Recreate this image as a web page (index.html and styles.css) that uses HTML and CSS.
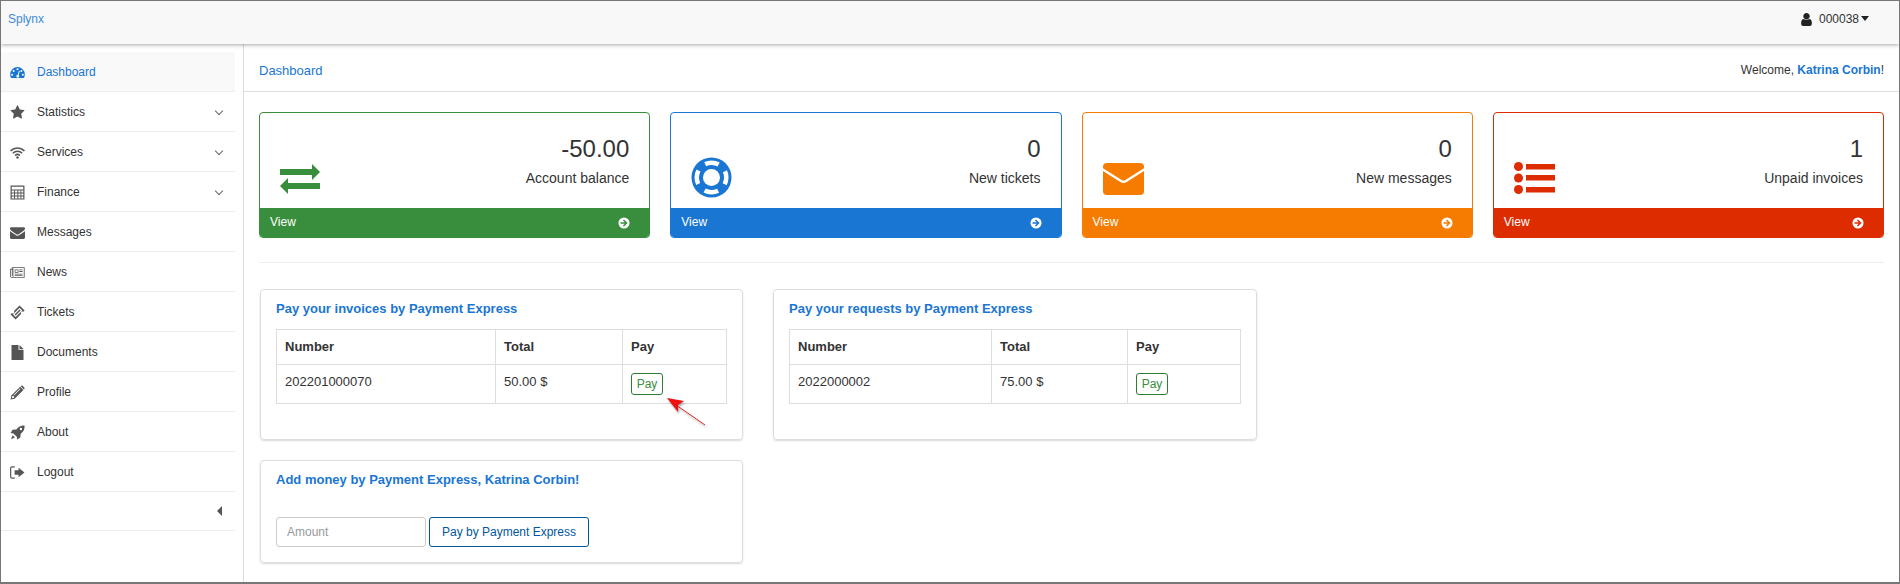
FILE: index.html
```html
<!DOCTYPE html>
<html lang="en">
<head>
<meta charset="UTF-8">
<meta name="viewport" content="width=device-width, initial-scale=1.0">
<title>Splynx - Dashboard</title>
<link rel="stylesheet" href="styles.css">
</head>
<body>
<svg class="sprite" xmlns="http://www.w3.org/2000/svg">
    <symbol id="i-circle-right" viewBox="0 0 16 16">
        <path fill-rule="evenodd" d="M8 .6a7.4 7.4 0 1 0 0 14.8A7.4 7.4 0 0 0 8 .6zM8 3.2 12.8 8 8 12.8 6.6 11.4 9 9.1H3.4V6.900H9L6.600 4.600z"/>
    </symbol>
    <symbol id="i-star" viewBox="0 0 1792 1792">
        <path d="M1728 647q0 22-26 48l-363 354 86 500q1 7 1 20 0 21-10.500 35.500t-30.500 14.500q-19 0-40-12l-449-236-449 236q-22 12-40 12-21 0-31.500-14.500t-10.500-35.500q0-6 2-20l86-500-364-354q-25-27-25-48 0-37 56-46l502-73 225-455q19-41 49-41t49 41l225 455 502 73q56 9 56 46z"/>
    </symbol>
    <symbol id="i-envelope" viewBox="0 0 1792 1792">
        <path d="M1792 710v794q0 66-47 113t-113 47h-1472q-66 0-113-47t-47-113v-794q44 49 101 87 362 246 497 345 57 42 92.500 65.500t94.500 48 110 24.500h2q51 0 110-24.500t94.500-48 92.500-65.500q170-123 498-345 57-39 100-87zm0-294q0 79-49 151t-122 123q-376 261-468 325-10 7-42.500 30.500t-54 38-52 32.500-57.500 27-50 9h-2q-23 0-50-9t-57.500-27-52-32.500-54-38-42.500-30.500q-91-64-262-182.500t-205-142.500q-62-42-117-115.500t-55-136.500q0-78 41.500-130t118.500-52h1472q65 0 112.500 47t47.500 113z"/>
    </symbol>
    <symbol id="i-user" viewBox="0 0 1792 1792">
        <path d="M1536 1399q0 109-62.500 187t-150.500 78h-854q-88 0-150.500-78t-62.500-187q0-85 8.500-160.500t31.500-152 58.500-131 94-89 134.500-34.500q131 128 313 128t313-128q76 0 134.500 34.500t94 89 58.500 131 31.500 152 8.500 160.500zm-256-887q0 159-112.500 271.500t-271.500 112.500-271.500-112.500-112.500-271.500 112.500-271.500 271.500-112.500 271.500 112.500 112.500 271.500z"/>
    </symbol>
    <symbol id="i-gauge" viewBox="0 0 16 16">
        <path fill-rule="evenodd" d="M8 2.200A7.800 7.800 0 0 0 .2 10c0 1.500.4 2.800 1 3.800h13.600c.6-1 1-2.300 1-3.800A7.800 7.800 0 0 0 8 2.200zM8 3.500a1.100 1.100 0 1 1 0 2.200 1.100 1.100 0 0 1 0-2.200zM3.900 5.300a1.100 1.100 0 1 1 0 2.200 1.100 1.100 0 0 1 0-2.200zM12.100 5.300a1.100 1.100 0 1 1 0 2.200 1.100 1.100 0 0 1 0-2.200zM2.300 9.200a1.100 1.100 0 1 1 0 2.200 1.100 1.100 0 0 1 0-2.200zM13.700 9.200a1.100 1.100 0 1 1 0 2.200 1.100 1.100 0 0 1 0-2.200zM9.500 6.200l.9.300-1.200 4.300a1.500 1.500 0 1 1-1-.3z"/>
    </symbol>
    <symbol id="i-wifi" viewBox="0 0 16 16">
        <g fill="none" stroke="currentColor" stroke-width="1.700">
            <path d="M.6 6.200a10.600 10.600 0 0 1 14.800 0"/>
            <path d="M3 8.800a7.100 7.100 0 0 1 10 0"/>
            <path d="M5.400 11.200a3.700 3.700 0 0 1 5.200 0"/>
        </g>
        <circle cx="8" cy="13.300" r="1.300"/>
    </symbol>
    <symbol id="i-calc" viewBox="0 0 14 14">
        <path fill-rule="evenodd" d="M.5.500h13v13H.5zM1.600 1.600v2.500h10.800V1.600zM1.600 5.200v1.900h2.200V5.200zM4.700 5.200v1.900h2.200V5.200zM7.800 5.200v1.900h2v-1.900zM10.600 5.200v1.900h1.800V5.200zM1.600 8v1.900h2.200V8zM4.700 8v1.900h2.200V8zM7.800 8v1.900h2V8zM10.600 8v1.900h1.800V8zM1.600 10.800v1.700h2.200v-1.700zM4.700 10.800v1.700h2.200v-1.700zM7.800 10.800v1.700h2v-1.700zM10.600 10.800v1.700h1.800v-1.700z"/>
    </symbol>
    <symbol id="i-news" viewBox="0 0 16 12">
        <path fill-rule="evenodd" d="M2 .4h13.600v11.200H1.400A1.300 1.300 0 0 1 .2 10.300V2h1.800zM3 1.300v9.400H1.400a.3.300 0 0 1-.3-.4V3H2v6.800h.8V1.300zM3.600 1.300v9.400h11.100V1.300zM5 2.700h4v3.600H5zM5.800 3.500v2h2.400v-2zM9.900 2.700h3.500v.9H9.900zM9.900 4.500h3.500v.9H9.900zM5 7.200h8.400v.8H5zM5 8.900h8.400v.8H5z"/>
    </symbol>
    <symbol id="i-ticket" viewBox="0 0 16 16">
        <path fill-rule="evenodd" d="M10.200.4 15.600 5.800l-1.400 1.400a1.500 1.500 0 0 0-2.200 2.200L6 15.400.6 10l1.400-1.400a1.500 1.500 0 0 0 2.200-2.200zM10.200 3 3.200 10 6 12.800l7-7zM10.200 4.700l1.100 1.100-5.300 5.300-1.100-1.100z"/>
    </symbol>
    <symbol id="i-file" viewBox="0 0 13 15">
        <path d="M.5 0h7v4.800h5V15H.5zM8.500 0 12.500 3.900H8.500z"/>
    </symbol>
    <symbol id="i-pencil" viewBox="0 0 14 14">
        <path fill-rule="evenodd" d="M.5 13.500 1.300 9.800 9.500 1.600l3 3-8.200 8.200zM2.200 10.300l-.5 2 2 -.5.200-1.300zM9.300 3.300l-6 6 .5.500 6-6zM10.300 .8a1 1 0 0 1 1.400 0l1.600 1.600a1 1 0 0 1 0 1.400l-.3.300-3-3z"/>
    </symbol>
    <symbol id="i-rocket" viewBox="0 0 14 14">
        <path fill-rule="evenodd" d="M13.600.4c.2 3.300-.8 5.700-3.600 7.800l-.4 3.400L6.800 13.500 6.300 11 3.200 7.900.6 7.400 2.400 4.500l3.500-.4C8 1.300 10.400.2 13.600.4zM10.200 2.600a1.100 1.100 0 1 0 0 2.200 1.100 1.100 0 0 0 0-2.200zM2.400 9.500 4.600 11.700 1 13.200z"/>
    </symbol>
    <symbol id="i-logout" viewBox="0 0 14 12">
        <path d="M8 1.500 13.500 6 8 10.500V8H4.300V4H8z"/>
        <path fill="none" stroke="currentColor" stroke-width="1.100" d="M4.500.8H1.800A1.200 1.200 0 0 0 .6 2v8a1.200 1.200 0 0 0 1.200 1.200h2.700"/>
    </symbol>
</svg>

<div class="page">
    <header class="navbar">
        <a class="brand" href="#">Splynx</a>
        <div class="account">
            <svg class="user-icon"><use href="#i-user"/></svg>
            <span>000038</span>
            <span class="caret"></span>
        </div>
    </header>

    <div class="layout">
        <nav class="sidebar">
            <ul class="menu">
                <li class="menu-item active"><svg class="menu-icon"><use href="#i-gauge"/></svg>Dashboard</li>
                <li class="menu-item"><svg class="menu-icon"><use href="#i-star"/></svg>Statistics<span class="chevron"></span></li>
                <li class="menu-item"><svg class="menu-icon"><use href="#i-wifi"/></svg>Services<span class="chevron"></span></li>
                <li class="menu-item"><svg class="menu-icon"><use href="#i-calc"/></svg>Finance<span class="chevron"></span></li>
                <li class="menu-item"><svg class="menu-icon"><use href="#i-envelope"/></svg>Messages</li>
                <li class="menu-item"><svg class="menu-icon"><use href="#i-news"/></svg>News</li>
                <li class="menu-item"><svg class="menu-icon"><use href="#i-ticket"/></svg>Tickets</li>
                <li class="menu-item"><svg class="menu-icon"><use href="#i-file"/></svg>Documents</li>
                <li class="menu-item"><svg class="menu-icon"><use href="#i-pencil"/></svg>Profile</li>
                <li class="menu-item"><svg class="menu-icon"><use href="#i-rocket"/></svg>About</li>
                <li class="menu-item"><svg class="menu-icon"><use href="#i-logout"/></svg>Logout</li>
                <li class="menu-toggle"><span class="caret-left"></span></li>
            </ul>
        </nav>

        <main class="main">
            <div class="crumbs">
                <a class="crumb" href="#">Dashboard</a>
                <div class="welcome">Welcome, <a href="#">Katrina Corbin</a>!</div>
            </div>

            <div class="content">
                <div class="cards">
                    <div class="card green">
                        <div class="card-body">
                            <svg class="card-icon" viewBox="0 0 41 41">
                                <path d="M0 12h32V7l8 8-8 8v-5H0z"/>
                                <path d="M40 26H8v-5l-8 8 8 8v-5h32z"/>
                            </svg>
                            <div class="card-text">
                                <div class="card-num">-50.00</div>
                                <div class="card-label">Account balance</div>
                            </div>
                        </div>
                        <div class="card-foot">View<svg class="go-icon"><use href="#i-circle-right"/></svg></div>
                    </div>
                    <div class="card blue">
                        <div class="card-body">
                            <svg class="card-icon" viewBox="0 0 41 41">
                                <circle cx="20.500" cy="20.500" r="20"/>
                                <circle class="ring-gaps" cx="20.500" cy="20.500" r="14.800"/>
                                <circle cx="20.500" cy="20.500" r="8.500" fill="#fff"/>
                            </svg>
                            <div class="card-text">
                                <div class="card-num">0</div>
                                <div class="card-label">New tickets</div>
                            </div>
                        </div>
                        <div class="card-foot">View<svg class="go-icon"><use href="#i-circle-right"/></svg></div>
                    </div>
                    <div class="card orange">
                        <div class="card-body">
                            <svg class="card-icon" viewBox="0 0 41 41">
                                <rect x="0" y="6" width="41" height="32" rx="4"/>
                                <path class="env-flap" d="M-1 12 18 24q2.500 1.500 5 0L42 12"/>
                            </svg>
                            <div class="card-text">
                                <div class="card-num">0</div>
                                <div class="card-label">New messages</div>
                            </div>
                        </div>
                        <div class="card-foot">View<svg class="go-icon"><use href="#i-circle-right"/></svg></div>
                    </div>
                    <div class="card red">
                        <div class="card-body">
                            <svg class="card-icon" viewBox="0 0 41 41">
                                <circle cx="4.500" cy="9.500" r="4.500"/>
                                <circle cx="4.500" cy="21" r="4.500"/>
                                <circle cx="4.500" cy="32.500" r="4.500"/>
                                <rect x="12" y="7" width="29" height="5.500"/>
                                <rect x="12" y="18" width="29" height="5.500"/>
                                <rect x="12" y="30" width="29" height="5.500"/>
                            </svg>
                            <div class="card-text">
                                <div class="card-num">1</div>
                                <div class="card-label">Unpaid invoices</div>
                            </div>
                        </div>
                        <div class="card-foot">View<svg class="go-icon"><use href="#i-circle-right"/></svg></div>
                    </div>
                </div>

                <hr class="divider">

                <div class="panels">
                    <div class="panel-col">
                        <section class="panel panel-tall">
                            <h3 class="panel-title">Pay your invoices by Payment Express</h3>
                            <table class="pay-table invoices">
                                <thead>
                                    <tr><th>Number</th><th>Total</th><th>Pay</th></tr>
                                </thead>
                                <tbody>
                                    <tr><td>202201000070</td><td>50.00 $</td><td><button class="btn-pay">Pay</button></td></tr>
                                </tbody>
                            </table>
                        </section>
                        <section class="panel panel-short">
                            <h3 class="panel-title">Add money by Payment Express, Katrina Corbin!</h3>
                            <form class="add-form">
                                <input class="amount" type="text" placeholder="Amount">
                                <button class="btn-submit" type="button">Pay by Payment Express</button>
                            </form>
                        </section>
                    </div>
                    <div class="panel-col panel-col-wide">
                        <section class="panel panel-tall">
                            <h3 class="panel-title">Pay your requests by Payment Express</h3>
                            <table class="pay-table requests">
                                <thead>
                                    <tr><th>Number</th><th>Total</th><th>Pay</th></tr>
                                </thead>
                                <tbody>
                                    <tr><td>2022000002</td><td>75.00 $</td><td><button class="btn-pay">Pay</button></td></tr>
                                </tbody>
                            </table>
                        </section>
                    </div>
                </div>
            </div>
        </main>
    </div>

    <svg class="callout" viewBox="0 0 50 40">
        <line x1="45" y1="33" x2="16" y2="13" stroke="#d9261c" stroke-width="1"/>
        <path d="M7 6 24 9 18 13 18 20z" fill="#f01010"/>
    </svg>
</div>
</body>
</html>
```

FILE: styles.css
```css
* {
    box-sizing: border-box;
}
html, body {
    margin: 0;
    height: 100%;
}
body {
    font-family: "Liberation Sans", Arial, sans-serif;
    font-size: 12px;
    color: #333;
    background-color: #fff;
}
a {
    color: #1976d2;
    text-decoration: none;
}
.sprite {
    display: none;
}
.page {
    position: relative;
    display: flex;
    flex-direction: column;
    height: 584px;
    border: 1px solid #777;
    border-bottom-width: 2px;
    overflow: hidden;
}

/* top bar */
.navbar {
    display: flex;
    align-items: center;
    justify-content: space-between;
    flex: none;
    height: 43px;
    padding: 0 30px 7px 7px;
    background-color: #f8f8f8;
    box-shadow: 0 1px 4px rgba(0, 0, 0, 0.35);
    position: relative;
}
.brand {
    color: #3f8ad8;
}
.account {
    display: flex;
    align-items: center;
}
.user-icon {
    width: 15px;
    height: 15px;
    margin-right: 5px;
    fill: #222;
}
.caret {
    width: 0;
    height: 0;
    margin: -1px 0 0 2px;
    border-top: 5px solid #222;
    border-left: 4px solid transparent;
    border-right: 4px solid transparent;
}

.layout {
    display: flex;
    flex: 1;
    min-height: 0;
}

/* sidebar */
.sidebar {
    flex: none;
    width: 243px;
    padding: 8px 8px 0 0;
    border-right: 1px solid #ddd;
}
.menu {
    margin: 0;
    padding: 0;
    list-style: none;
}
.menu-item {
    display: flex;
    align-items: center;
    height: 40px;
    padding-top: 1px;
    border-bottom: 1px solid #eee;
    color: #333;
}
.menu-item.active {
    color: #1976d2;
    background-color: #f9f9f9;
}
.menu-icon {
    flex: none;
    width: 15px;
    height: 15px;
    margin: 0 12px 0 9px;
    color: #555;
    fill: #555;
}
.active .menu-icon {
    color: #1976d2;
    fill: #1976d2;
}
.chevron {
    width: 6px;
    height: 6px;
    margin: -3px 13px 0 auto;
    border-right: 1px solid #666;
    border-bottom: 1px solid #666;
    transform: rotate(45deg);
}
.menu-toggle {
    display: flex;
    align-items: center;
    justify-content: flex-end;
    height: 39px;
    padding-right: 13px;
    border-bottom: 1px solid #eee;
}
.caret-left {
    border-right: 5px solid #555;
    border-top: 5px solid transparent;
    border-bottom: 5px solid transparent;
}

/* main area */
.main {
    flex: 1;
    min-width: 0;
}
.crumbs {
    display: flex;
    align-items: center;
    justify-content: space-between;
    height: 48px;
    padding: 6px 15px 0 15px;
    border-bottom: 1px solid #ddd;
}
.crumb {
    font-size: 13px;
}
.welcome {
    margin-top: -1px;
}
.welcome a {
    font-weight: bold;
}
.content {
    padding: 20px 15px 0 15px;
}

/* stat cards */
.cards {
    display: grid;
    grid-template-columns: repeat(4, 1fr);
    gap: 20px;
}
.card {
    height: 126px;
    border: 1px solid;
    border-radius: 4px;
    overflow: hidden;
}
.card-body {
    display: flex;
    justify-content: space-between;
    height: 95px;
    padding: 0 20px 0 20px;
}
.card-icon {
    flex: none;
    width: 41px;
    height: 41px;
    margin-top: 44px;
}
.card-text {
    padding-top: 21px;
    text-align: right;
}
.card-num {
    font-size: 24px;
    line-height: 30px;
}
.card-label {
    margin-top: 4px;
    font-size: 14px;
    line-height: 20px;
}
.card-foot {
    display: flex;
    align-items: center;
    justify-content: space-between;
    height: 30px;
    padding: 0 19px 2px 10px;
    color: #fff;
}
.go-icon {
    width: 12px;
    height: 12px;
    margin-top: 2px;
    fill: #fff;
}
.green { border-color: #388e3c; fill: #388e3c; }
.blue { border-color: #1976d2; fill: #1976d2; }
.orange { border-color: #f57c00; fill: #f57c00; }
.red { border-color: #dd2c00; fill: #dd2c00; }
.green .card-foot { background-color: #388e3c; }
.blue .card-foot { background-color: #1976d2; }
.orange .card-foot { background-color: #f57c00; }
.red .card-foot { background-color: #dd2c00; }
.ring-gaps {
    fill: none;
    stroke: #fff;
    stroke-width: 4.5;
    stroke-dasharray: 14 9.25;
    stroke-dashoffset: 7;
}
.env-flap {
    fill: none;
    stroke: #fff;
    stroke-width: 2.5;
}

.divider {
    height: 1px;
    margin: 24px 0 26px;
    border: 0;
    background-color: #eee;
}

/* payment panels */
.panels {
    display: flex;
    gap: 30px;
    padding-left: 1px;
}
.panel-col {
    display: flex;
    flex-direction: column;
    gap: 20px;
    width: 483px;
}
.panel-col-wide {
    width: 484px;
}
.panel {
    padding: 9px 15px 0;
    border: 1px solid #ddd;
    border-radius: 4px;
    box-shadow: 0 1px 2px rgba(0, 0, 0, 0.15);
}
.panel-tall {
    height: 151px;
}
.panel-short {
    height: 103px;
}
.panel-title {
    margin: 0 0 10px;
    font-size: 13px;
    line-height: 20px;
    font-weight: bold;
    color: #1976d2;
}
.pay-table {
    width: 451px;
    border-collapse: collapse;
    table-layout: fixed;
    font-size: 13px;
}
.pay-table.requests {
    width: 452px;
}
.pay-table th, .pay-table td {
    padding: 8px;
    line-height: 18px;
    text-align: left;
    vertical-align: top;
    border: 1px solid #ddd;
}
.invoices th:nth-child(1) { width: 219px; }
.invoices th:nth-child(2) { width: 127px; }
.requests th:nth-child(1) { width: 202px; }
.requests th:nth-child(2) { width: 136px; }
.btn-pay {
    display: block;
    width: 32px;
    height: 22px;
    padding: 0;
    font: 12px "Liberation Sans", Arial, sans-serif;
    color: #388e3c;
    background-color: #fff;
    border: 1px solid #2e7d32;
    border-radius: 3px;
}
.add-form {
    display: flex;
    gap: 3px;
    margin-top: 27px;
}
.amount {
    width: 150px;
    height: 30px;
    padding: 0 10px;
    font: 12px "Liberation Sans", Arial, sans-serif;
    border: 1px solid #ccc;
    border-radius: 3px;
}
.amount::placeholder {
    color: #999;
}
.btn-submit {
    width: 160px;
    height: 30px;
    padding: 0;
    font: 12px "Liberation Sans", Arial, sans-serif;
    color: #01579b;
    background-color: #fff;
    border: 1px solid #01579b;
    border-radius: 3px;
}

/* annotation arrow */
.callout {
    position: absolute;
    left: 659px;
    top: 391px;
    width: 50px;
    height: 40px;
    filter: drop-shadow(1px 2px 1px rgba(0, 0, 0, 0.35));
}
```
